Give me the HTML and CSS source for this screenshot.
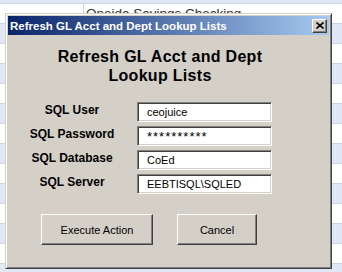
FILE: index.html
```html
<!DOCTYPE html>
<html lang="en">
<head>
  <meta charset="UTF-8">
  <title>Refresh GL Acct and Dept Lookup Lists</title>
  <link rel="stylesheet" href="styles.css">
</head>
<body>
  <div class="sheet">
    <div class="sheet-row">
      <div class="cell">Oneida Savings Checking</div>
    </div>

    <div class="dialog">
      <div class="titlebar">
        <span class="title">Refresh GL Acct and Dept Lookup Lists</span>
        <button class="close" title="Close">
          <svg width="8" height="7" viewBox="0 0 8 7"><path d="M0.5 0.5L7.5 6.5M7.5 0.5L0.5 6.5" stroke="#000" stroke-width="1.6" fill="none"/></svg>
        </button>
      </div>

      <div class="client">
        <h1 class="heading">Refresh GL Acct and Dept<br>Lookup Lists</h1>

        <div class="form">
          <label class="lbl">SQL User</label>
          <div class="box">ceojuice</div>
          <label class="lbl">SQL Password</label>
          <div class="box pw">**********</div>
          <label class="lbl">SQL Database</label>
          <div class="box">CoEd</div>
          <label class="lbl">SQL Server</label>
          <div class="box">EEBTISQL\SQLED</div>
        </div>

        <div class="actions">
          <button class="btn btn-exec">Execute Action</button>
          <button class="btn btn-cancel">Cancel</button>
        </div>
      </div>
    </div>
  </div>
</body>
</html>
```

FILE: styles.css
```css
body { margin: 0; font-family: "Liberation Sans", Arial, sans-serif; }

/* spreadsheet behind the form */
.sheet {
  position: relative; width: 342px; height: 272px; overflow: hidden;
  background:
    repeating-linear-gradient(to bottom, #c9d5e6 0 1px, transparent 1px 20px),
    repeating-linear-gradient(to bottom, #fff 0 20px, #dfe8f4 20px 40px);
  background-position: 0 3px, 0 3px;
}
.sheet-row { height: 20px; margin-top: 3px; }
.cell {
  margin-left: 83px; height: 20px; padding-left: 2px;
  border-left: 1px solid #c9d5e6;
  font-size: 13.5px; line-height: 20px; color: #333; padding-top: 1px;
}

/* the userform window */
.dialog {
  position: absolute; left: 5px; top: 13px;
  width: 327px; height: 256px; box-sizing: border-box;
  padding: 2px;
  background: #d4d0c8;
  border: 1px solid; border-color: #d4d0c8 #404040 #404040 #d4d0c8;
  box-shadow: inset 1px 1px #fff, inset -1px -1px #808080;
  display: flex; flex-direction: column;
}
.titlebar {
  height: 19px; display: flex; align-items: center; justify-content: space-between;
  padding: 0 2px; flex-shrink: 0;
  background: linear-gradient(to right, #0a246a, #a6caf0);
}
.title { color: #fff; font-weight: bold; font-size: 11.5px; }
.close {
  width: 15px; height: 14px; padding: 0; display: flex; align-items: center; justify-content: center;
  background: #d4d0c8;
  border: 1px solid; border-color: #fff #404040 #404040 #fff;
  box-shadow: inset -1px -1px #808080;
}

.client { padding-top: 12px; }
.heading {
  margin: 0; padding-right: 17px;
  text-align: center; font-size: 16px; line-height: 19px; letter-spacing: 0.3px;
  font-weight: bold; color: #000;
}
.form {
  display: grid; grid-template-columns: 104px 135px;
  column-gap: 13px; row-gap: 4px;
  margin: 17px 0 0 12px;
}
.lbl {
  align-self: start; text-align: center;
  font-size: 12px; font-weight: bold; line-height: 16px; color: #000;
}
.box {
  height: 20px; box-sizing: border-box; padding-left: 9px;
  background: #fff; font-size: 11px; line-height: 18px; color: #000;
  border: 1px solid; border-color: #808080 #fff #fff #808080;
  box-shadow: inset 1px 1px #404040, inset -1px -1px #d4d0c8;
}
.pw { font-size: 13px; letter-spacing: 1px; line-height: 20px; }

.actions { display: flex; gap: 24px; margin: 20px 0 0 33px; }
.btn {
  height: 31px; padding: 0;
  font-family: inherit; font-size: 11px; color: #000;
  background: #d4d0c8;
  border: 1px solid; border-color: #fff #404040 #404040 #fff;
  box-shadow: inset -1px -1px #808080;
}
.btn-exec { width: 112px; }
.btn-cancel { width: 80px; }
```
